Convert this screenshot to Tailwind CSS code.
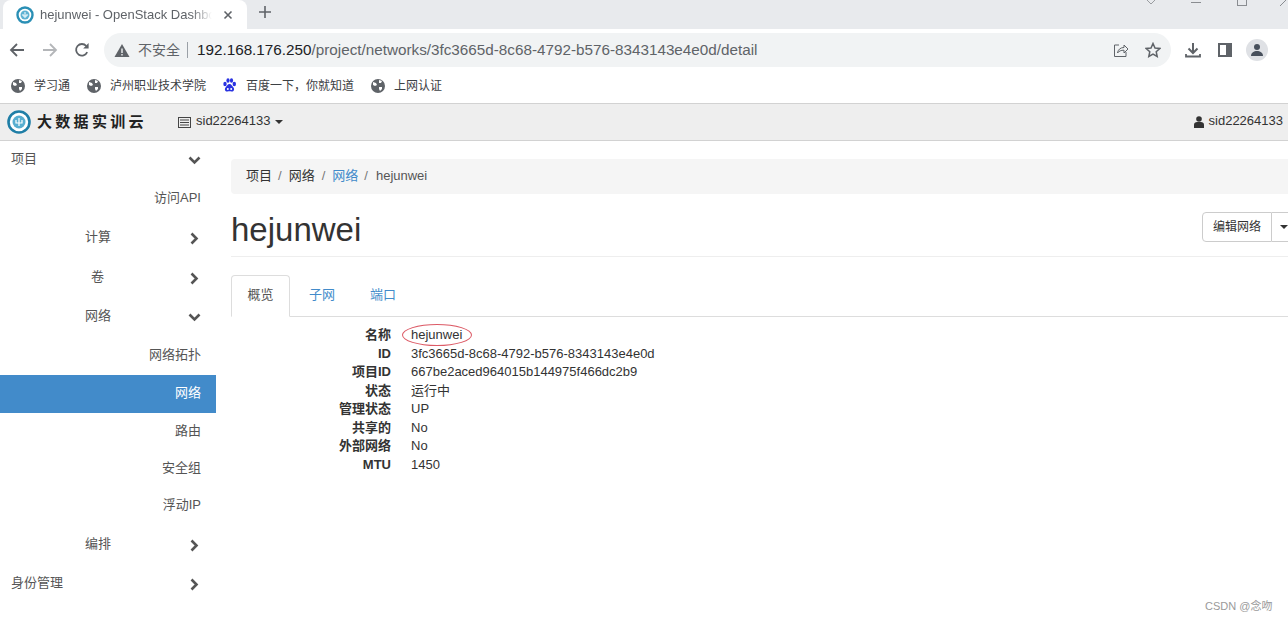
<!DOCTYPE html>
<html lang="zh-CN">
<head>
<meta charset="UTF-8">
<title>hejunwei - OpenStack Dashboard</title>
<script src="https://cdn.jsdelivr.net/npm/@tailwindcss/browser@4"></script>
</head>
<body class="relative w-[1288px] h-[620px] overflow-hidden bg-white text-[#333] font-['Liberation_Sans','Noto_Sans_CJK_SC',sans-serif]">

<!-- tab strip -->
<div class="h-[29px] bg-[#e8eaed] flex items-start">
  <div class="w-[244px] h-[29px] ml-[3px] bg-white rounded-t-lg flex items-center pl-[13px] text-[13px] text-[#5f6368]">
    <svg class="w-[18px] h-[18px] shrink-0" viewBox="0 0 18 18"><circle cx="9" cy="9" r="7.5" fill="#fff" stroke="#2a8fb5" stroke-width="2.4"/><circle cx="9" cy="9" r="4.5" fill="#5fb2d3"/><path d="M9 6v6M7 8v2h4V8" stroke="#fff" stroke-width="1" fill="none"/></svg>
    <span class="ml-[6px] w-[172px] overflow-hidden whitespace-nowrap [mask-image:linear-gradient(to_right,black_88%,transparent)]">hejunwei - OpenStack Dashboard</span>
    <svg class="w-[10px] h-[10px] ml-[11px]" viewBox="0 0 10 10"><path d="M1.5 1.5l7 7M8.5 1.5l-7 7" stroke="#5f6368" stroke-width="1.6"/></svg>
  </div>
  <svg class="w-[14px] h-[14px] ml-[11px] mt-[5px]" viewBox="0 0 14 14"><path d="M7 1v12M1 7h12" stroke="#5f6368" stroke-width="1.6"/></svg>
  <div class="ml-auto flex items-start">
    <svg class="w-[12px] h-[5px] mr-[34px]" viewBox="0 0 12 5"><path d="M2 0l4 4 4-4" stroke="#9a9da1" fill="none"/></svg>
    <div class="w-[10px] h-px bg-[#8a8d91] mt-[2px] mr-[36px]"></div>
    <div class="w-[10px] h-[6px] border border-t-0 border-[#8a8d91] mr-[33px]"></div>
    <svg class="w-[8px] h-[6px]" viewBox="0 0 8 6"><path d="M0 6l6-6" stroke="#8a8d91" fill="none"/></svg>
  </div>
</div>

<!-- toolbar -->
<div class="h-[42px] flex items-center">
  <svg class="w-[16px] h-[16px] ml-[9px]" viewBox="0 0 16 16"><path d="M15 8H2M8 2L2 8l6 6" stroke="#5f6368" stroke-width="1.8" fill="none"/></svg>
  <svg class="w-[16px] h-[16px] ml-[17px]" viewBox="0 0 16 16"><path d="M1 8h13M8 2l6 6-6 6" stroke="#b4b6b9" stroke-width="1.8" fill="none"/></svg>
  <svg class="w-[16px] h-[16px] ml-[16px]" viewBox="0 0 16 16"><path d="M13.2 10.2A5.8 5.8 0 1 1 12.3 4" stroke="#5f6368" stroke-width="1.8" fill="none"/><path d="M14.6 1v5.4H9.2z" fill="#5f6368"/></svg>
  <div class="w-[1067px] h-[34px] ml-[14px] bg-[#f1f3f4] rounded-full flex items-center pl-[10px] pr-[10px]">
    <svg class="w-[16px] h-[15px]" viewBox="0 0 16 15"><path d="M8 1l7.5 13H.5z" fill="#5f6368"/><path d="M8 5.5v4.5M8 11v1.6" stroke="#f1f3f4" stroke-width="1.4"/></svg>
    <span class="ml-[8px] text-[14px] text-[#5f6368]">不安全</span>
    <div class="w-px h-[16px] bg-[#9aa0a6] ml-[7px]"></div>
    <span class="ml-[9px] text-[15.26px] whitespace-nowrap text-[#5f6368]"><span class="text-[#202124]">192.168.176.250</span>/project/networks/3fc3665d-8c68-4792-b576-8343143e4e0d/detail</span>
    <svg class="w-[16px] h-[16px] ml-auto" viewBox="0 0 16 16"><path d="M6 3H1.5v11.5h11.5V10" stroke="#5f6368" fill="none"/><path d="M4.5 11c.5-3.500 3-5.500 6.500-5.500V3l4 4-4 4V8.200c-3 0-5 .8-6.500 2.800z" stroke="#5f6368" fill="none"/></svg>
    <svg class="w-[16px] h-[16px] ml-[16px]" viewBox="0 0 16 16"><path d="M8 1.500l2 4.500 4.800.5-3.600 3.200 1 4.800L8 12.100 3.800 14.500l1-4.800L1.200 6.500 6 6z" stroke="#5f6368" stroke-width="1.500" fill="none"/></svg>
  </div>
  <svg class="w-[16px] h-[16px] ml-[14px]" viewBox="0 0 16 16"><path d="M8 1v9M3.500 6.500L8 11l4.500-4.500" stroke="#5f6368" stroke-width="2" fill="none"/><path d="M1 12v2.500h14V12" stroke="#5f6368" stroke-width="1.800" fill="none"/></svg>
  <svg class="w-[14px] h-[14px] ml-[17px]" viewBox="0 0 14 14"><rect x="1" y="1" width="12" height="12" fill="#fff" stroke="#5f6368" stroke-width="2"/><rect x="8" y="1" width="5" height="12" fill="#5f6368"/></svg>
  <div class="w-[22px] h-[22px] ml-[14px] rounded-full bg-[#dfe1e5] flex items-center justify-center">
    <svg class="w-[14px] h-[14px]" viewBox="0 0 14 14"><circle cx="7" cy="4" r="3" fill="#48505c"/><path d="M1 13c0-3.500 3-5 6-5s6 1.500 6 5z" fill="#48505c"/></svg>
  </div>
</div>

<!-- bookmarks -->
<div class="h-[32px] pb-[3px] flex items-center pl-[11px] text-[12px] text-[#3c4043]">
  <svg class="w-[14px] h-[14px]" viewBox="0 0 14 14"><circle cx="7" cy="7" r="7" fill="#5f6368"/><path d="M2 3l3 1 1 2-2 1-2-1zM8 1l3 1-1 2H8zM8 8l3 0 0 2-2 2-1-2z" fill="#fff"/></svg>
  <span class="ml-[9px]">学习通</span>
  <svg class="w-[14px] h-[14px] ml-[17px]" viewBox="0 0 14 14"><circle cx="7" cy="7" r="7" fill="#5f6368"/><path d="M2 3l3 1 1 2-2 1-2-1zM8 1l3 1-1 2H8zM8 8l3 0 0 2-2 2-1-2z" fill="#fff"/></svg>
  <span class="ml-[9px]">泸州职业技术学院</span>
  <svg class="w-[15px] h-[15px] ml-[16px]" viewBox="0 0 15 15" fill="#2932e1"><ellipse cx="3" cy="6" rx="1.700" ry="2.200"/><ellipse cx="6" cy="2.500" rx="1.600" ry="2.200"/><ellipse cx="9.500" cy="2.500" rx="1.600" ry="2.200"/><ellipse cx="12.300" cy="6" rx="1.700" ry="2.200"/><path d="M7.500 6c-2 0-2.500 2-4 3.500-1.500 2 0 4.500 2 4 1.300-.3 2.700-.3 4 0 2 .5 3.500-2 2-4C10 8 9.500 6 7.500 6z"/><circle cx="5.800" cy="11" r="1" fill="#fff"/><circle cx="9.200" cy="11" r="1" fill="#fff"/></svg>
  <span class="ml-[9px]">百度一下，你就知道</span>
  <svg class="w-[14px] h-[14px] ml-[17px]" viewBox="0 0 14 14"><circle cx="7" cy="7" r="7" fill="#5f6368"/><path d="M2 3l3 1 1 2-2 1-2-1zM8 1l3 1-1 2H8zM8 8l3 0 0 2-2 2-1-2z" fill="#fff"/></svg>
  <span class="ml-[9px]">上网认证</span>
</div>

<!-- dashboard navbar -->
<div class="h-[38px] bg-[#eeeeee] border-y border-[#d2d2d2] flex items-center text-[13px] text-[#333]">
  <svg class="w-[24px] h-[24px] ml-[7px]" viewBox="0 0 24 24"><circle cx="12" cy="12" r="10.500" fill="#fff" stroke="#1f7ea6" stroke-width="2.600"/><circle cx="12" cy="12" r="6.500" fill="#58aed0"/><path d="M12 8v8M9 10v3h6v-3" stroke="#fff" stroke-width="1.200" fill="none"/></svg>
  <span class="ml-[6px] w-[110px] text-[15px] font-bold text-[#222] tracking-[3.3px] whitespace-nowrap">大数据实训云</span>
  <svg class="w-[13px] h-[11px] ml-[31px]" viewBox="0 0 13 11"><rect x=".5" y=".5" width="12" height="10" fill="none" stroke="#444"/><path d="M2 3h9M2 5.500h9M2 8h9" stroke="#444"/></svg>
  <span class="ml-[5px] pb-[2px]">sid22264133</span>
  <div class="ml-[5px] w-0 h-0 border-x-[4px] border-x-transparent border-t-[4px] border-t-[#333]"></div>
  <svg class="w-[10px] h-[12px] ml-auto" viewBox="0 0 10 12"><circle cx="5" cy="3" r="2.800" fill="#333"/><path d="M0 12V8.500C0 7 1.500 6 3 6h4c1.500 0 3 1 3 2.500V12z" fill="#333"/></svg>
  <span class="ml-[5px] mr-[5px] pb-[2px]">sid22264133</span>
</div>

<div class="flex">
  <!-- sidebar -->
  <nav class="w-[216px] shrink-0 text-[13px] text-[#555]">
    <div class="h-[38px] flex items-center pl-[11px] pr-[15px] justify-between"><span class="pb-[2px]">项目</span>
      <svg class="w-[13px] h-[9px]" viewBox="0 0 13 9"><path d="M1.500 1.500l5 5 5-5" stroke="#555" stroke-width="2.600" fill="none"/></svg></div>
    <div class="h-[39px] pb-[2px] flex items-center justify-end pr-[15px]">访问API</div>
    <div class="h-[39px] flex items-center pl-[85px] pr-[17px] justify-between"><span class="pb-[2px]">计算</span>
      <svg class="w-[9px] h-[13px] mt-[2px]" viewBox="0 0 9 13"><path d="M1.500 1.500l5 5-5 5" stroke="#555" stroke-width="2.600" fill="none"/></svg></div>
    <div class="h-[40px] flex items-center pl-[91px] pr-[17px] justify-between"><span class="pb-[1px]">卷</span>
      <svg class="w-[9px] h-[13px] mt-[2px]" viewBox="0 0 9 13"><path d="M1.500 1.500l5 5-5 5" stroke="#555" stroke-width="2.600" fill="none"/></svg></div>
    <div class="h-[39px] flex items-center pl-[85px] pr-[15px] justify-between"><span class="pb-[2px]">网络</span>
      <svg class="w-[13px] h-[9px] mt-[2px]" viewBox="0 0 13 9"><path d="M1.500 1.500l5 5 5-5" stroke="#555" stroke-width="2.600" fill="none"/></svg></div>
    <div class="h-[39px] pb-[2px] flex items-center justify-end pr-[15px]">网络拓扑</div>
    <div class="h-[38px] pb-[2px] flex items-center justify-end pr-[15px] bg-[#428bca] text-white">网络</div>
    <div class="h-[37px] pb-[2px] flex items-center justify-end pr-[15px]">路由</div>
    <div class="h-[38px] pb-[2px] flex items-center justify-end pr-[15px]">安全组</div>
    <div class="h-[37px] pb-[3px] flex items-center justify-end pr-[15px]">浮动IP</div>
    <div class="h-[40px] flex items-center pl-[85px] pr-[17px] justify-between"><span class="pb-[2px]">编排</span>
      <svg class="w-[9px] h-[13px]" viewBox="0 0 9 13"><path d="M1.500 1.500l5 5-5 5" stroke="#555" stroke-width="2.600" fill="none"/></svg></div>
    <div class="h-[38px] flex items-center pl-[11px] pr-[17px] justify-between"><span class="pb-[2px]">身份管理</span>
      <svg class="w-[9px] h-[13px]" viewBox="0 0 9 13"><path d="M1.500 1.500l5 5-5 5" stroke="#555" stroke-width="2.600" fill="none"/></svg></div>
  </nav>

  <!-- main -->
  <main class="flex-1 ml-[15px] pt-[18px] min-w-0">
    <div class="h-[35px] bg-[#f5f5f5] rounded-l flex items-center pl-[15px] pb-[2px] text-[13px]">
      <span>项目</span><span class="text-[#777] ml-[6px] mr-[7px]">/</span>
      <span>网络</span><span class="text-[#777] ml-[7px] mr-[7px]">/</span>
      <span class="text-[#428bca]">网络</span><span class="text-[#777] ml-[6px] mr-[6px]">/</span>
      <span class="text-[#555] ml-[2px] pt-[1px]">hejunwei</span>
    </div>
    <div class="h-[63px] border-b border-[#eeeeee] flex items-center justify-between">
      <h1 class="text-[33px] text-[#333] leading-none pt-[9px]">hejunwei</h1>
      <div class="flex h-[30px] text-[12px] mt-[4px] mr-[-8px]">
        <button class="w-[70px] border border-[#ccc] rounded-l bg-white">编辑网络</button>
        <div class="w-[24px] border-y border-[#ccc] flex items-center justify-center"><div class="w-0 h-0 border-x-[4px] border-x-transparent border-t-[4px] border-t-[#333]"></div></div>
      </div>
    </div>
    <div class="mt-[18px] h-[42px] border-b border-[#ddd] flex text-[13px] text-[#428bca]">
      <div class="w-[59px] h-[42px] pb-[2px] border border-[#ddd] border-b-white bg-white rounded-t flex items-center justify-center text-[#555]">概览</div>
      <div class="w-[64px] pb-[2px] flex items-center justify-center">子网</div>
      <div class="w-[58px] pb-[2px] flex items-center justify-center">端口</div>
    </div>
    <dl class="relative mt-[9px] grid grid-cols-[160px_1fr] gap-x-[20px] text-[13px] leading-[18.500px]">
      <dt class="font-bold text-right">名称</dt><dd>hejunwei</dd>
      <dt class="font-bold text-right">ID</dt><dd>3fc3665d-8c68-4792-b576-8343143e4e0d</dd>
      <dt class="font-bold text-right">项目ID</dt><dd>667be2aced964015b144975f466dc2b9</dd>
      <dt class="font-bold text-right">状态</dt><dd>运行中</dd>
      <dt class="font-bold text-right">管理状态</dt><dd>UP</dd>
      <dt class="font-bold text-right">共享的</dt><dd>No</dd>
      <dt class="font-bold text-right">外部网络</dt><dd>No</dd>
      <dt class="font-bold text-right">MTU</dt><dd>1450</dd>
      <div class="absolute left-[171px] top-[-2px] w-[70px] h-[22px] rounded-[50%] border border-[#dc5a66]"></div>
    </dl>
  </main>
</div>

<div class="absolute left-[1205px] top-[598px] text-[11px] text-[#9a9a9a]">CSDN @念吻</div>
</body>
</html>
